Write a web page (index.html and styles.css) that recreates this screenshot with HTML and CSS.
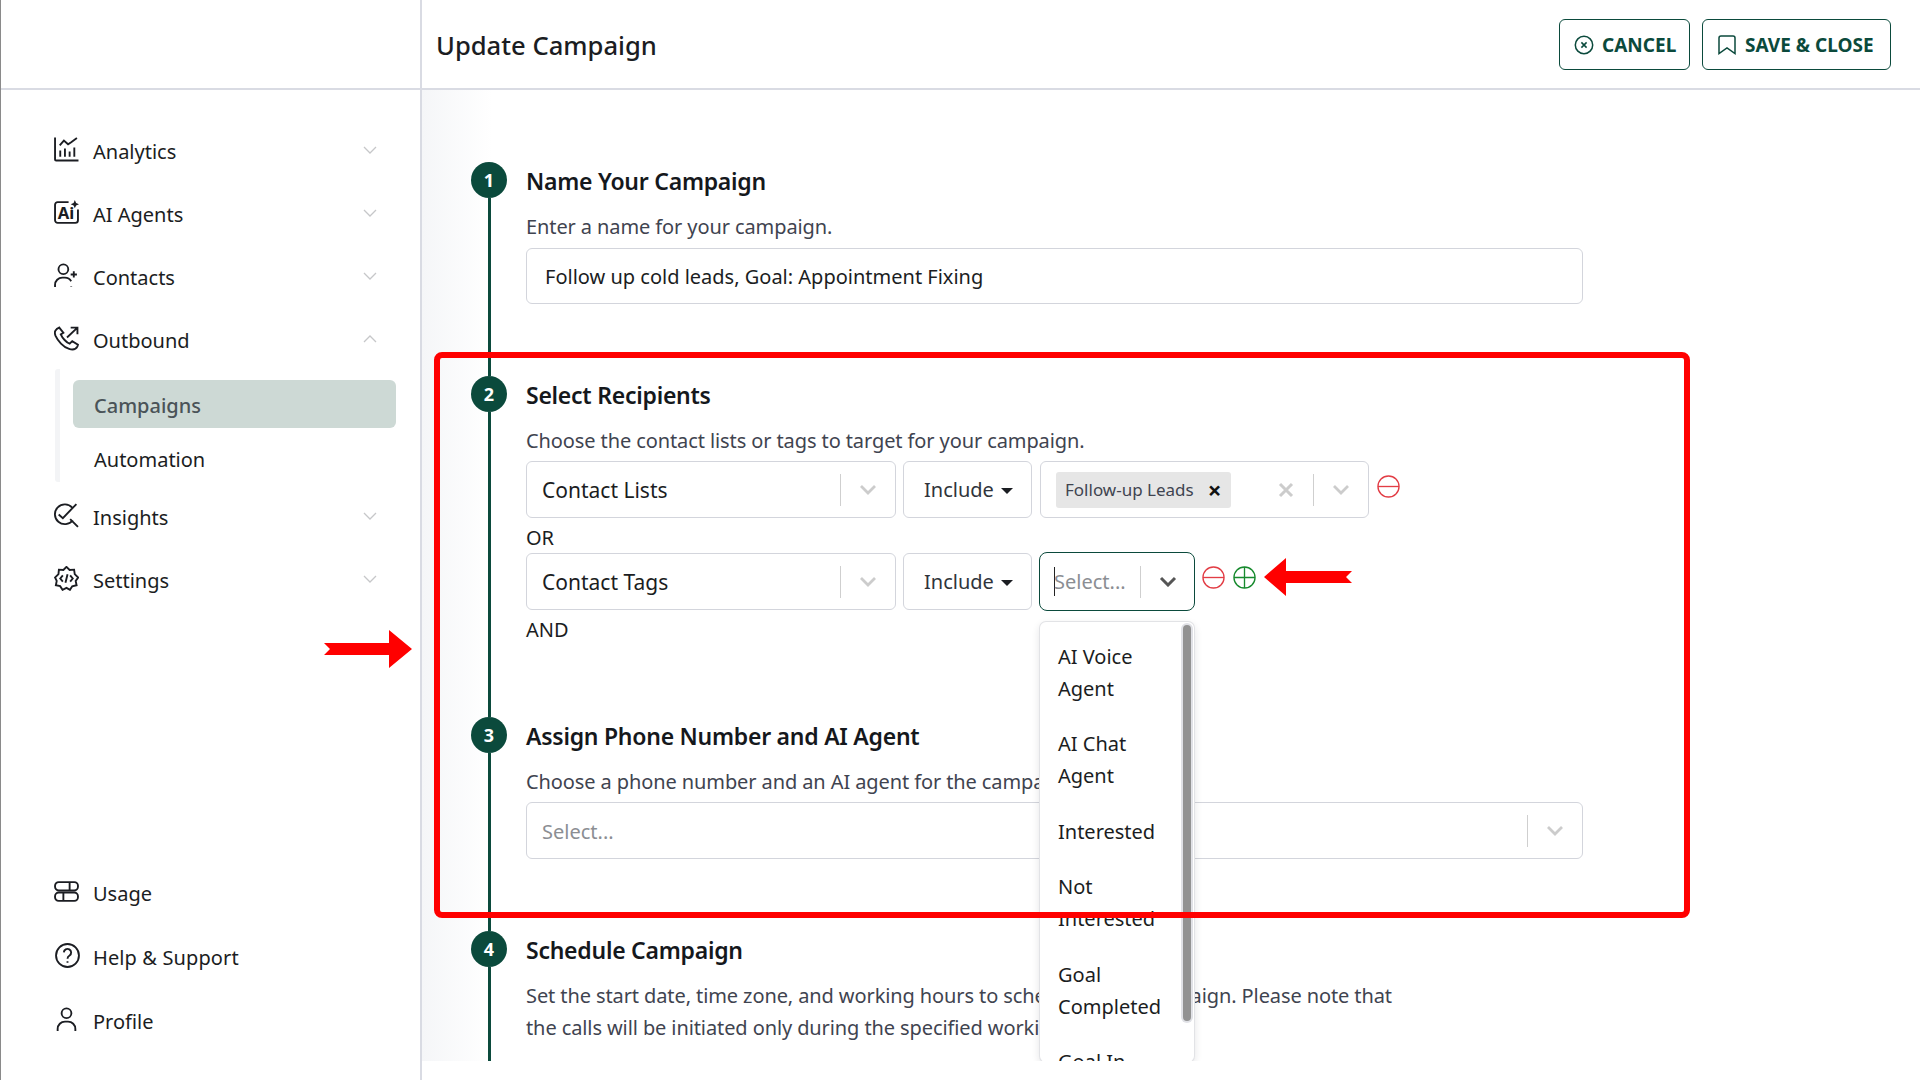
FILE: index.html
```html
<!DOCTYPE html>
<html lang="en">
<head>
<meta charset="utf-8">
<title>Update Campaign</title>
<link rel="stylesheet" href="styles.css">
</head>
<body>
<div class="app">
  <div class="brand"></div>
  <header class="topbar">
    <h1 class="page-title">Update Campaign</h1>
    <div class="actions">
      <button class="btn btn-cancel">
        <svg class="btn-icon" viewBox="0 0 20 20"><circle cx="10" cy="10" r="8.7"/><path d="M7.4 7.4l5.2 5.2M12.6 7.4l-5.2 5.2"/></svg>
        CANCEL
      </button>
      <button class="btn btn-save">
        <svg class="btn-icon" viewBox="0 0 20 20"><path d="M2 3a2 2 0 0 1 2-2h12a2 2 0 0 1 2 2V18.500L10 13 2 18.500z"/></svg>
        SAVE &amp; CLOSE
      </button>
    </div>
  </header>

  <aside class="sidebar">
    <nav class="nav-top">
      <a class="nav-item">
        <svg class="nav-icon" viewBox="0 0 24 24"><path d="M1 0.500V21.500a1 1 0 0 0 1 1H23.500M6 19v-6M10.500 19v-8M15 19v-5M19.500 19v-9M5.500 8l4-4.500 4 3.500 3-2 5.500-4"/></svg>
        <span class="nav-label">Analytics</span>
        <svg class="nav-chevron" viewBox="0 0 14 8"><path d="M1 1l6 6 6-6"/></svg>
      </a>
      <a class="nav-item">
        <svg class="nav-icon" viewBox="0 0 24 24"><path d="M14 2H3.500a2.500 2.500 0 0 0-2.500 2.500v15A2.500 2.500 0 0 0 3.500 22h17a2.500 2.500 0 0 0 2.500-2.500V9"/><path class="fill-dark" d="M20 0l1.200 2.800L24 4l-2.800 1.200L20 8l-1.200-2.800L16 4l2.800-1.200z"/><text class="ai-glyph" x="3.500" y="18.500">Ai</text></svg>
        <span class="nav-label">AI Agents</span>
        <svg class="nav-chevron" viewBox="0 0 14 8"><path d="M1 1l6 6 6-6"/></svg>
      </a>
      <a class="nav-item">
        <svg class="nav-icon" viewBox="0 0 24 24"><circle cx="9" cy="6" r="4.700"/><path d="M1 23v-2a7 7 0 0 1 7-7h2.500a7 7 0 0 1 6 3.500M16.500 22.500V23M19 8v6M16 11h6"/></svg>
        <span class="nav-label">Contacts</span>
        <svg class="nav-chevron" viewBox="0 0 14 8"><path d="M1 1l6 6 6-6"/></svg>
      </a>
      <a class="nav-item">
        <svg class="nav-icon" viewBox="0 0 24 24"><path d="M5 1.500 2.500 3C.5 4.500.5 7 1.500 9.500c2 4.500 7.500 11 13 12.500 3 1 6.500.5 8-2.500l.5-1.500-5.500-3.500-2.500 2.500c-3-1-7-5.500-8.500-9L9 6.500zM12.500 11 22.500 1.500M16 1.500h6.500V8"/></svg>
        <span class="nav-label">Outbound</span>
        <svg class="nav-chevron" viewBox="0 0 14 8"><path d="M1 7l6-6 6 6"/></svg>
      </a>
      <div class="subnav">
        <a class="sub-item sub-active">Campaigns</a>
        <a class="sub-item">Automation</a>
      </div>
      <a class="nav-item">
        <svg class="nav-icon" viewBox="0 0 24 24"><path d="M17.500 4.500A9.500 9.500 0 1 0 18 16.500M15.500 15.500 23 23M4.500 11l4 3.500L21.500 1"/></svg>
        <span class="nav-label">Insights</span>
        <svg class="nav-chevron" viewBox="0 0 14 8"><path d="M1 1l6 6 6-6"/></svg>
      </a>
      <a class="nav-item">
        <svg class="nav-icon" viewBox="0 0 24 24"><path d="M12 .800l3 3 4.300-.300.600 4.300 3.300 3.200-2.400 3.300.9 4.200-4.200 1-2.200 3.400-3.300-1.900-3.800 1.900-2.300-3.500-4.100-.9.800-4.200L1 11l3.300-3.200.4-4.300 4.300.300z"/><path d="M8.500 9 6 12l2.500 3M15.500 9 18 12l-2.500 3M13 8l-2 8"/></svg>
        <span class="nav-label">Settings</span>
        <svg class="nav-chevron" viewBox="0 0 14 8"><path d="M1 1l6 6 6-6"/></svg>
      </a>
    </nav>
    <nav class="nav-bottom">
      <a class="nav-item">
        <svg class="nav-icon" viewBox="0 0 24 24"><rect x="1" y="3" width="22" height="8" rx="3.500"/><rect x="1" y="13" width="22" height="8" rx="3.500"/><path d="M15 3v8M9 13v8"/></svg>
        <span class="nav-label">Usage</span>
      </a>
      <a class="nav-item">
        <svg class="nav-icon icon-help" viewBox="0 0 24 24"><circle cx="12" cy="12" r="11"/><path d="M8.500 9a3.500 3.500 0 1 1 5.500 3c-1.300.8-2 1.500-2 3M12 17.500v1.500"/></svg>
        <span class="nav-label label-help">Help &amp; Support</span>
      </a>
      <a class="nav-item">
        <svg class="nav-icon" viewBox="0 0 24 24"><circle cx="12" cy="6" r="4.700"/><path d="M3.500 23v-2a7 7 0 0 1 7-7h3a7 7 0 0 1 7 7v2"/></svg>
        <span class="nav-label">Profile</span>
      </a>
    </nav>
  </aside>

  <main class="content">
    <section class="step">
      <div class="marker"><span class="dot">1</span><span class="line"></span></div>
      <div class="step-body">
        <h2 class="step-title">Name Your Campaign</h2>
        <p class="step-desc">Enter a name for your campaign.</p>
        <div class="field field-full">Follow up cold leads, Goal: Appointment Fixing</div>
      </div>
    </section>

    <section class="step step-recipients">
      <div class="marker"><span class="dot">2</span><span class="line"></span></div>
      <div class="step-body">
        <h2 class="step-title">Select Recipients</h2>
        <p class="step-desc">Choose the contact lists or tags to target for your campaign.</p>
        <div class="filter-row">
          <div class="select select-type">
            <span class="select-value">Contact Lists</span>
            <span class="select-sep"></span>
            <svg class="select-chevron" viewBox="0 0 18 11"><path d="M2 2l7 7 7-7"/></svg>
          </div>
          <div class="include">Include<span class="caret"></span></div>
          <div class="select select-multi">
            <span class="chip">Follow-up Leads<span class="chip-x">×</span></span>
            <svg class="clear-x" viewBox="0 0 16 16"><path d="M2 2l12 12M14 2L2 14"/></svg>
            <span class="select-sep"></span>
            <svg class="select-chevron" viewBox="0 0 18 11"><path d="M2 2l7 7 7-7"/></svg>
          </div>
          <svg class="round-icon minus row-one" viewBox="0 0 24 24"><circle cx="12" cy="12" r="11"/><path d="M1 12h22"/></svg>
        </div>
        <div class="joiner">OR</div>
        <div class="filter-row">
          <div class="select select-type">
            <span class="select-value">Contact Tags</span>
            <span class="select-sep"></span>
            <svg class="select-chevron" viewBox="0 0 18 11"><path d="M2 2l7 7 7-7"/></svg>
          </div>
          <div class="include">Include<span class="caret"></span></div>
          <div class="select-wrap">
            <div class="select select-focus">
              <span class="cursor"></span><span class="placeholder">Select...</span>
              <span class="select-sep"></span>
              <svg class="select-chevron chevron-dark" viewBox="0 0 18 11"><path d="M2 2l7 7 7-7"/></svg>
            </div>
            <div class="dropdown">
              <div class="option">AI Voice Agent</div>
              <div class="option">AI Chat Agent</div>
              <div class="option">Interested</div>
              <div class="option">Not Interested</div>
              <div class="option">Goal Completed</div>
              <div class="option">Goal In Progress</div>
              <span class="scroll-thumb"></span>
            </div>
          </div>
          <svg class="round-icon minus" viewBox="0 0 24 24"><circle cx="12" cy="12" r="11"/><path d="M1 12h22"/></svg>
          <svg class="round-icon plus" viewBox="0 0 24 24"><circle cx="12" cy="12" r="11"/><path d="M1 12h22M12 1v22"/></svg>
        </div>
        <div class="joiner joiner-last">AND</div>
      </div>
    </section>

    <section class="step step-assign">
      <div class="marker"><span class="dot">3</span><span class="line"></span></div>
      <div class="step-body">
        <h2 class="step-title">Assign Phone Number and AI Agent</h2>
        <p class="step-desc">Choose a phone number and an AI agent for the campaign.</p>
        <div class="select select-full">
          <span class="placeholder">Select...</span>
          <span class="select-sep"></span>
          <svg class="select-chevron" viewBox="0 0 18 11"><path d="M2 2l7 7 7-7"/></svg>
        </div>
      </div>
    </section>

    <section class="step">
      <div class="marker"><span class="dot">4</span><span class="line"></span></div>
      <div class="step-body">
        <h2 class="step-title">Schedule Campaign</h2>
        <p class="step-desc">Set the start date, time zone, and working hours to schedule your campaign. Please note that<br>the calls will be initiated only during the specified working hours.</p>
      </div>
    </section>
  </main>
</div>

<div class="highlight"></div>
<svg class="arrow arrow-right" viewBox="0 0 88 38"><path d="M0 13H65V0L88 19 65 38V25H0L6 19z"/></svg>
<svg class="arrow arrow-left" viewBox="0 0 88 38"><path d="M88 13H22V0L0 19 22 38V25H88L82 19z"/></svg>
</body>
</html>
```
FILE: styles.css
```css
* { box-sizing: border-box; }
html, body { margin: 0; height: 100%; overflow: hidden; background: #fff; }
body { font-family: "Noto Sans", "Open Sans", sans-serif; font-size: 20px; color: #1b1d22; }

.app {
  display: grid;
  grid-template-columns: 421px 1fr;
  grid-template-rows: 90px 1fr;
  height: 1080px;
  border-left: 1px solid #8a8a8a;
}
.brand { border-right: 2px solid #d9dbe3; border-bottom: 2px solid #d9dbe3; }
.topbar {
  display: flex;
  align-items: center;
  justify-content: space-between;
  padding: 1px 29px 0 14px;
  border-bottom: 2px solid #d9dbe3;
}
.page-title { margin: 2px 0 0; font-size: 25.600px; font-weight: 500; color: #1b1d22; }
.actions { display: flex; gap: 12px; }
.btn {
  display: flex;
  align-items: center;
  gap: 8px;
  height: 51px;
  border: 1.500px solid #0b4a3c;
  border-radius: 6px;
  background: #fff;
  color: #0b4a3c;
  font: 700 19px "Noto Sans", sans-serif;
  white-space: nowrap;
}
.btn-cancel { width: 131px; padding: 0 0 0 14px; }
.btn-save { width: 189px; padding: 0 0 0 14px; }
.btn-icon { width: 20px; height: 20px; fill: none; stroke: #0b4a3c; stroke-width: 1.500; flex: none; }

.sidebar {
  display: flex;
  flex-direction: column;
  justify-content: space-between;
  border-right: 2px solid #d9dbe3;
  padding: 30px 26px 33px 53px;
}
.nav-top { display: flex; flex-direction: column; }
.nav-bottom { display: flex; flex-direction: column; gap: 12px; }
.nav-item { display: flex; align-items: center; height: 63px; }
.nav-bottom .nav-item { height: 52px; }
.nav-icon { width: 25px; height: 25px; fill: none; stroke: #1b1d22; stroke-width: 1.800; flex: none; margin-top: -4px; }
.fill-dark { fill: #1b1d22; stroke: none; }
.ai-glyph { font: 700 16px "Noto Sans", sans-serif; fill: #1b1d22; stroke: none; }
.nav-label { margin-left: 14px; flex: 1; }
.icon-help { margin-left: 1px; }
.label-help { margin-left: 13px; letter-spacing: .12px; }
.nav-chevron { width: 14px; height: 8px; fill: none; stroke: #c6c7c9; stroke-width: 1.300; margin-right: 17px; flex: none; margin-top: -4px; }
.subnav {
  display: flex;
  flex-direction: column;
  gap: 7px;
  margin: -3px 0 4px 1px;
  padding: 11px 0 0 13px;
  height: 113px;
  border-left: 5px solid #f3f4f6;
  border-radius: 3px;
}
.sub-item { display: flex; align-items: center; height: 48px; padding-left: 21px; border-radius: 6px; flex: none; }
.sub-active { background: #cdd9d5; color: #4a5358; font-weight: 500; width: 323px; padding-top: 2px; }

.content {
  height: 971px;
  overflow: hidden;
  padding: 72px 0 0 49px;
  background: linear-gradient(90deg, #f5f6f8 0, #fff 70px);
}
.step { display: flex; gap: 19px; }
.marker { display: flex; flex-direction: column; align-items: center; width: 36px; flex: none; }
.dot {
  display: flex;
  align-items: center;
  justify-content: center;
  width: 36px;
  height: 36px;
  flex: none;
  border-radius: 50%;
  background: #0b4a3c;
  color: #fff;
  font-size: 18px;
  font-weight: 700;
}
.line { width: 3px; flex: 1; background: #0b4a3c; }
.step-body { padding-bottom: 72px; flex: 1; min-width: 0; }
.step-recipients .step-body { padding-bottom: 69px; }
.step:last-child .step-body { padding-bottom: 200px; }
.step-title { margin: 0; height: 40px; line-height: 39px; font-size: 23px; font-weight: 600; color: #15181c; letter-spacing: -.25px; }
.step-desc { margin: 9px 0 5px; line-height: 32px; color: #3f4450; letter-spacing: -.1px; }
.step-recipients .step-desc, .step-assign .step-desc { margin-bottom: 4px; }
.field {
  display: flex;
  align-items: center;
  width: 1057px;
  height: 56px;
  padding: 0 18px;
  border: 1px solid #d3d5dc;
  border-radius: 6px;
}
.filter-row { display: flex; align-items: center; gap: 8px; height: 57px; position: relative; }
.select {
  display: flex;
  align-items: center;
  height: 57px;
  border: 1px solid #d3d5dc;
  border-radius: 6px;
  background: #fff;
  flex: none;
}
.select-type { width: 370px; margin-right: -1px; padding-left: 15px; }
.select-value { flex: 1; font-size: 21px; }
.select-sep { width: 1.500px; height: 32px; background: #cfcfcf; flex: none; }
.select-chevron { width: 18px; height: 11px; margin: 0 18px; fill: none; stroke: #cccccc; stroke-width: 2.800; flex: none; }
.chevron-dark { stroke: #555; stroke-width: 3; margin: 0 17px 0 18px; }
.include {
  display: flex;
  align-items: center;
  width: 129px;
  height: 57px;
  padding-left: 20px;
  border: 1px solid #d3d5dc;
  border-radius: 6px;
  color: #30343b;
  flex: none;
}
.caret { width: 0; height: 0; margin-left: 7px; margin-top: 3px; border: 6px solid transparent; border-top: 6px solid #1b1d22; border-bottom: 0; }
.select-multi { width: 329px; padding-left: 15px; }
.chip {
  display: flex;
  align-items: center;
  justify-content: space-between;
  width: 176px;
  height: 36px;
  padding: 0 9px;
  background: #e6e6e6;
  border-radius: 3px;
  color: #3f4450;
  font-size: 17px;
  white-space: nowrap;
}
.chip-x { color: #111; font-size: 24px; font-weight: 700; line-height: 1; }
.clear-x { width: 16px; height: 16px; margin: 0 19px 0 47px; fill: none; stroke: #cccccc; stroke-width: 3; flex: none; }
.round-icon { width: 23px; height: 23px; fill: none; stroke-width: 1.400; flex: none; margin-top: -8px; }
.round-icon.row-one { margin-top: -6px; }
.minus { stroke: #e23d45; }
.plus { stroke: #178a2e; }
.joiner { height: 35px; line-height: 39px; color: #1b1d22; }
.joiner-last { height: 38px; }
.select-wrap { position: relative; flex: none; width: 154px; height: 59px; }
.select-focus { width: 156px; height: 59px; margin-left: -1px; padding-left: 13.500px; border: 1.600px solid #0b4a3c; border-radius: 8px; }
.cursor { width: 1.500px; height: 29px; background: #222; flex: none; }
.placeholder { color: #8b8e93; flex: 1; }
.select-focus .placeholder { margin-left: -1px; }
.select-full { width: 1057px; height: 57px; padding-left: 15px; }
.select-full .placeholder { padding-top: 1px; }
.dropdown {
  position: absolute;
  top: 70px;
  left: 0;
  width: 154px;
  height: 440px;
  padding: 3.500px 34px 0 18px;
  background: #fff;
  border-radius: 6px;
  box-shadow: 0 0 0 1px #e2e3e6, 0 3px 9px rgba(30, 30, 40, .14);
  overflow: hidden;
  z-index: 5;
}
.option { padding: 15px 0 7px; line-height: 32px; color: #1b1d22; }
.option + .option { padding-top: 16.500px; }
.scroll-thumb {
  position: absolute;
  top: 3px;
  right: 3px;
  width: 8px;
  height: 396px;
  background: #929292;
  border-radius: 4px;
  box-shadow: 0 0 0 2px #e0e1e6;
}

.highlight {
  position: absolute;
  left: 434px;
  top: 352px;
  width: 1256px;
  height: 566px;
  border: 6px solid #ff0000;
  border-radius: 8px;
  z-index: 10;
  pointer-events: none;
}
.arrow { position: absolute; width: 88px; height: 38px; fill: #ff0000; z-index: 11; }
.arrow-right { left: 324px; top: 630px; }
.arrow-left { left: 1264px; top: 558px; }
```
